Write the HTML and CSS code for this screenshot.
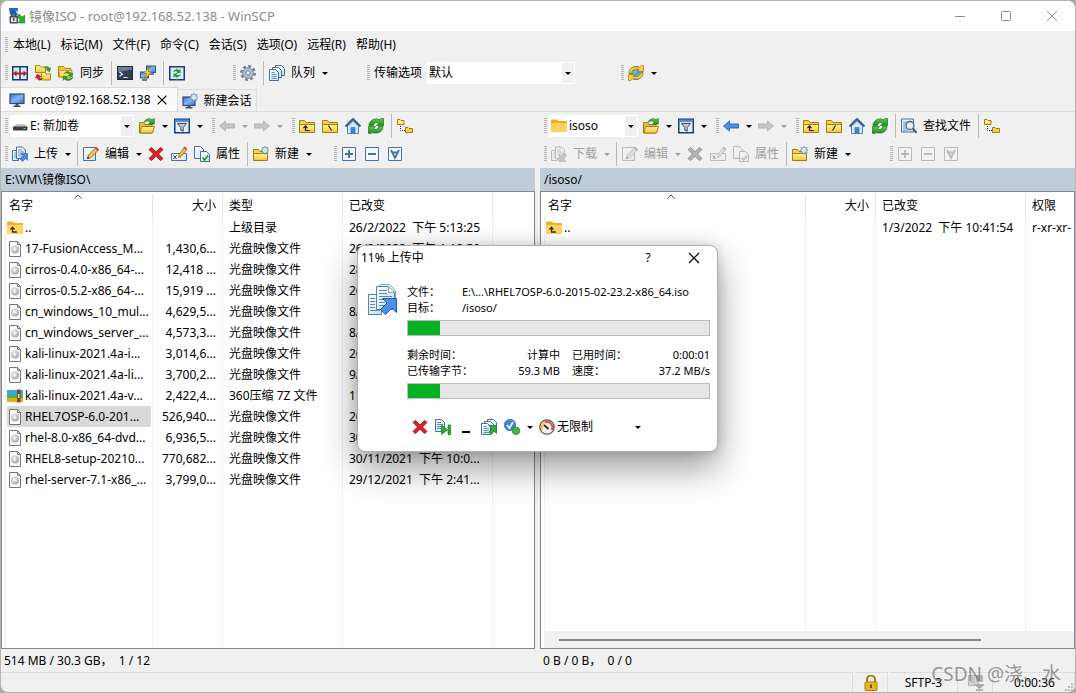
FILE: index.html
```html
<!DOCTYPE html>
<html lang="zh-CN">
<head>
<meta charset="utf-8">
<title>镜像ISO - root@192.168.52.138 - WinSCP</title>
<link rel="stylesheet" href="styles.css">
</head>
<body>
<svg class="defs" width="0" height="0" aria-hidden="true">
  <defs>
    <linearGradient id="gy" x1="0" y1="0" x2="0" y2="1"><stop offset="0" stop-color="#fff39a"/><stop offset="1" stop-color="#f5c936"/></linearGradient>
    <linearGradient id="gb" x1="0" y1="0" x2="1" y2="1"><stop offset="0" stop-color="#2f72d8"/><stop offset=".5" stop-color="#7db8ff"/><stop offset="1" stop-color="#2d6fd2"/></linearGradient>
    <linearGradient id="gp" x1="0" y1="0" x2="1" y2="1"><stop offset="0" stop-color="#ffffff"/><stop offset="1" stop-color="#c9def3"/></linearGradient>
    <linearGradient id="gg" x1="0" y1="0" x2="0" y2="1"><stop offset="0" stop-color="#5fcf4c"/><stop offset="1" stop-color="#1d8a1e"/></linearGradient>
    <radialGradient id="gd" cx=".4" cy=".35" r=".7"><stop offset="0" stop-color="#f4f4f4"/><stop offset="1" stop-color="#9fa3a6"/></radialGradient>
  </defs>
  <symbol id="app" viewBox="0 0 16 16"><path d="M1 0h8v4L6.500 2.500 7 8H2z" fill="#2f80d8"/><path d="M0 0h9L6 3l3 3-3 2-3-3-2 2z" fill="#1b6cc8"/><path d="M16 15V7l-3 2-3-3-2 2 3 4-2 3z" fill="#2fae2b" stroke="#167a1c" stroke-width=".5"/><path d="M2.500 8V6a2.200 2.200 0 0 1 4.400 0v2" fill="none" stroke="#444b52" stroke-width="1.400"/><rect x=".5" y="8" width="8.500" height="7.500" rx="1" fill="#46505a"/><rect x="2" y="9.500" width="5.500" height="4.500" fill="#dfe4e8"/><rect x="4.200" y="10" width="1.200" height="3" fill="#333"/></symbol>
  <symbol id="compare" viewBox="0 0 16 16"><rect x=".75" y="1.750" width="14.500" height="13" fill="#dceafa" stroke="#123f77" stroke-width="1.500"/><path d="M8 1v14" stroke="#123f77" stroke-width="1.500"/><path d="M1 8.500l3.500-3v2h7v-2l3.500 3-3.500 3v-2h-7v2z" fill="#c51212"/></symbol>
  <symbol id="syncdirs" viewBox="0 0 16 16"><path d="M.5 .5h4l1 1.500h5v5.500H.5z" fill="url(#gy)" stroke="#b58410"/><path d="M6.500 7.500h3.500l1 1.500h4.500v6h-9z" fill="url(#gy)" stroke="#b58410"/><path d="M9.500 3c1.500-2.300 4-1.800 4.700.2l1.600-.4L14.500 7 11 4.500l1.500-.5c-.6-1.300-1.900-1.500-3-1z" fill="#28a82b" stroke="#16761a" stroke-width=".4"/><path d="M7.500 13.500c-1.500 2.500-5 2-5.300-.7L.4 13 2.200 9l4 2.600-1.700.7c.5 1.200 1.700 1.700 3 1.200z" fill="#d32020" stroke="#8f0d0d" stroke-width=".4"/></symbol>
  <symbol id="sync" viewBox="0 0 16 16"><path d="M.5 12V1.500h5L7 3.500h6V12z" fill="#f2c730" stroke="#b58410"/><path d="M1 5.500h13l-1 6.500H1.500z" fill="url(#gy)" stroke="#b58410" stroke-width=".7"/><path d="M6 8.500c2-3 6-2.500 7 0l2-.8-.8 4.300-4-1.700 1.500-.7C10.500 8 8 7.700 6 8.500zM15 12c-1 4-6 4.500-8.500 2L5 15.500V11l4.500.8-1.500 1C9.500 14.500 13 14 15 12z" fill="#2aa12b" stroke="#16761a" stroke-width=".4"/></symbol>
  <symbol id="console" viewBox="0 0 16 16"><rect x=".5" y="1.500" width="15" height="13" fill="#2f4156" stroke="#1c2b3a"/><path d="M1 2h14v2.500L1 7z" fill="#6c7f93"/><path d="M2.500 7l3 2.200-3 2.200" fill="none" stroke="#fff" stroke-width="1.100"/><path d="M6.500 12.500h4" stroke="#fff"/></symbol>
  <symbol id="putty" viewBox="0 0 16 16"><rect x="6.500" y="1" width="9" height="6.500" fill="url(#gb)" stroke="#45566a"/><path d="M9 9h5" stroke="#45566a" stroke-width="1.500"/><rect x=".5" y="7" width="8" height="6" fill="url(#gb)" stroke="#45566a"/><path d="M2 15h5" stroke="#45566a" stroke-width="1.500"/><path d="M9.500 2L4 8.500h3L4.500 14 11.500 7H8z" fill="#ffe03a" stroke="#a8780c" stroke-width=".7"/></symbol>
  <symbol id="syncbrowse" viewBox="0 0 16 16"><rect x=".75" y="1.750" width="14.500" height="13" fill="#dceafa" stroke="#123f77" stroke-width="1.500"/><path d="M8 2v13" stroke="#7fa0c6" stroke-width=".8"/><path d="M4 7.500C4.500 4.500 8 3.500 10 5l1.500-1.200V8H7.500l1.200-1.300C7 5.800 5.500 6 4 7.500zM12 9c-.5 3-4 4-6 2.500l-1.500 1.200V8.500h4L7.300 9.800C9 10.700 10.500 10.500 12 9z" fill="#21a027"/></symbol>
  <symbol id="gear" viewBox="0 0 16 16"><circle cx="8" cy="8" r="6.700" fill="none" stroke="#6d7f90" stroke-width="2.400" stroke-dasharray="2.900 2.362"/><circle cx="8" cy="8" r="5.300" fill="#b3c0cd" stroke="#71869b"/><circle cx="8" cy="8" r="2.200" fill="#f0f0f0" stroke="#6b7d90"/></symbol>
  <symbol id="queue" viewBox="0 0 16 16"><path d="M6.500.5h6l3 3v7h-9z" fill="url(#gp)" stroke="#43719f"/><path d="M3.500 2.500h6l3 3v7h-9z" fill="url(#gp)" stroke="#43719f"/><path d="M.5 4.500h6l3 3v8h-9z" fill="url(#gp)" stroke="#43719f"/><path d="M2.500 7.500h3M2.500 9.500h5M2.500 11.500h5M2.500 13.500h5" stroke="#5c8fc2"/></symbol>
  <symbol id="globe" viewBox="0 0 16 16"><circle cx="8" cy="8" r="6.500" fill="#4f9be6" stroke="#2b6ab0"/><path d="M5 7l3-2 1 2-2 3-2-.5zM10 9.500l2-1-1 3-1 .5z" fill="#6fd06a"/><path d="M.8 8C1 3 6 .5 11 2.500L13 .5h2.500v6H9.500L11 4.700C7.500 3.500 4 4.500 3.500 8zM15.200 8c-.2 5-5.200 7.500-10.200 5.500l-2 2H.5v-6h6L5 11.300c3.500 1.200 7 .2 7.500-3.300z" fill="#f7cf3c" stroke="#a9790e" stroke-width=".7"/></symbol>
  <symbol id="monitor" viewBox="0 0 16 16"><rect x="1" y="2" width="14" height="9.500" fill="url(#gb)" stroke="#3f4a56" stroke-width="1.200"/><path d="M6.500 12h3v1.500h2V15h-7v-1.500h2z" fill="#46525f"/></symbol>
  <symbol id="newsess" viewBox="0 0 16 16"><rect x="1" y="4" width="12" height="8.500" fill="url(#gb)" stroke="#3f4a56" stroke-width="1.200"/><path d="M5.500 13h3v1h2v1.500h-7V14h2z" fill="#46525f"/><path d="M12 .2l1 1.800 2-.7-.7 2 1.700 1-1.700 1 .7 2-2-.7-1 1.800-1-1.800-2 .7.700-2-1.700-1 1.700-1-.7-2 2 .7z" fill="#d5e4f4" stroke="#6c93ba" stroke-width=".8"/></symbol>
  <symbol id="drive" viewBox="0 0 16 16"><path d="M4 6h9l2.500 3H1z" fill="#c3c5c7"/><rect x="1" y="8.500" width="14.500" height="4" rx="1" fill="#3c3e41"/><rect x="11.500" y="10" width="2" height="1" fill="#4fdf58"/></symbol>
  <symbol id="open" viewBox="0 0 16 16"><path d="M.5 15V4.500h4L6 6.500h7V15z" fill="#e9c036" stroke="#a87b10"/><path d="M1 15l1.500-6.500h13L13.500 15z" fill="url(#gy)" stroke="#a87b10"/><path d="M5 4.500C6 .8 10.500-.2 13 1.700L15.300.5v5.700h-5.800l1.700-1.700C9.500 2.500 7 2.700 5 4.500z" fill="url(#gg)" stroke="#15751a" stroke-width=".6"/></symbol>
  <symbol id="filter" viewBox="0 0 16 16"><rect x=".75" y="1.250" width="14.500" height="13.500" fill="#e4eefa" stroke="#183f74" stroke-width="1.500"/><path d="M1 1.500h14V4H1z" fill="#4f8ee0"/><path d="M3.500 5.500h9L9.200 9.500v3.700l-2.400-1V9.500z" fill="#c6c9cc" stroke="#474d55"/></symbol>
  <symbol id="back" viewBox="0 0 16 16"><path d="M.5 8L6.500 3v3h9v4h-9v3z" fill="#4a90f0" stroke="#2360b0" stroke-width=".9"/></symbol>
  <symbol id="fwd" viewBox="0 0 16 16"><path d="M15.500 8L9.500 3v3h-9v4h9v3z" fill="#4a90f0" stroke="#2360b0" stroke-width=".9"/></symbol>
  <symbol id="folder" viewBox="0 0 16 16"><path d="M.5 14.500V2.500h5L7 4.500h8.500v10z" fill="#f7d64d" stroke="#a87b10"/><path d="M1 7h14v7H1z" fill="url(#gy)"/><path d="M.5 6.500h15" stroke="#a87b10"/></symbol>
  <symbol id="up" viewBox="0 0 16 16"><use href="#folder"/><path d="M6.500 12.500V8M4.500 10l2-2.200 2 2.200M6 12.500h5" fill="none" stroke="#222" stroke-width="1.200"/></symbol>
  <symbol id="rootl" viewBox="0 0 16 16"><use href="#folder"/><path d="M6.500 7.500l3 5" stroke="#222" stroke-width="1.200"/></symbol>
  <symbol id="rootr" viewBox="0 0 16 16"><use href="#folder"/><path d="M9.500 7.500l-3 5" stroke="#222" stroke-width="1.200"/></symbol>
  <symbol id="home" viewBox="0 0 16 16"><path d="M2.500 8L8 3l5.500 5v7.500h-11z" fill="#d5e6fa" stroke="#5582b4"/><path d="M.5 8.500L8 1l7.500 7.500" fill="none" stroke="#3b5f8d" stroke-width="2"/><path d="M6 9.500h4V15H6z" fill="#3c86e6" stroke="#2c5f9d" stroke-width=".5"/></symbol>
  <symbol id="refresh" viewBox="0 0 16 16"><path d="M1 7.500C1 3 5.500-.5 11.500 1.500L13.500 .5h2v7H8.500L10.800 4.800C8 3.700 6 5 5.500 7.500z" fill="url(#gg)" stroke="#15751a" stroke-width=".7"/><path d="M15 8.500c0 4.500-4.500 8-10.500 6l-2 1h-2v-7h7L5.200 11.200c2.800 1.100 4.800-.2 5.300-2.700z" fill="url(#gg)" stroke="#15751a" stroke-width=".7"/></symbol>
  <symbol id="tree" viewBox="0 0 16 16"><path d="M.5 6.500v-5h2.500l1 1h3v4zM8.500 14.500v-5H11l1 1h3.500v4z" fill="url(#gy)" stroke="#a87b10"/><path d="M3.500 8v4.500H8" fill="none" stroke="#222" stroke-dasharray="1 1"/></symbol>
  <symbol id="upload" viewBox="0 0 16 16"><path d="M.5 4.500h6v10h-6z" fill="url(#gp)" stroke="#43719f"/><path d="M4.500 1h6l3 3v8.500h-9z" fill="url(#gp)" stroke="#43719f"/><path d="M6 4h4M6 6h6M6 8h5M6 10h4M2 7h2M2 9h2M2 11h2" stroke="#5c8fc2" stroke-width=".9"/><path d="M15.800 7.500v7l-2.200-2.200-3 3.200-2.600-2.600 3.200-3L9 7.500z" fill="#4a8be8" stroke="#2257a6" stroke-width=".6"/></symbol>
  <symbol id="bigupload" viewBox="0 0 32 32"><path d="M1.500 10.500h13v20h-13z" fill="url(#gp)" stroke="#5480ad"/><path d="M11.500 2.500l2-2h9l6 6v15h-17z" fill="#eaf3fc" stroke="#7fa4c8"/><path d="M9.500 2.500h12l6 6v17h-18z" fill="url(#gp)" stroke="#5480ad"/><path d="M21.500 2.500v6h6z" fill="#fff" stroke="#7fa4c8"/><path d="M12 6.500h8M12 9.500h8M12 12.500h13M12 15.500h8M12 18.500h6M12 21.500h6M3 14.500h5M3 17.500h5M3 20.500h5M3 23.500h5M3 26.500h10" stroke="#4f86bf"/><path d="M29.500 14.500v14L25 24l-6.500 6.500-5-5L20 19l-4.500-4.500z" fill="#4d8ff0" stroke="#2456a0"/></symbol>
  <symbol id="download" viewBox="0 0 16 16"><path d="M.5 4.500h6v10h-6z" fill="url(#gp)" stroke="#43719f"/><path d="M4.500 1h6l3 3v8.500h-9z" fill="url(#gp)" stroke="#43719f"/><path d="M6 4h4M6 6h6M6 8h5M2 7h2M2 9h2M2 11h2" stroke="#5c8fc2" stroke-width=".9"/><path d="M8 15.500v-7l2.200 2 2-3.200 3.500 2-3 3.800 2.300 2.400z" fill="#4a8be8" stroke="#2257a6" stroke-width=".6"/></symbol>
  <symbol id="edit" viewBox="0 0 16 16"><path d="M.5 1.500h12v13H.5z" fill="url(#gp)" stroke="#4b7199"/><path d="M4.500 12.500l1-3.500L13 1.500 15.500 4 8 11.500z" fill="#f5c63a" stroke="#8a6312" stroke-width=".8"/><path d="M12 2.500L13.500 1 16 3.500 14.500 5z" fill="#d9483b"/><path d="M4 13l.8-2.400 1.600 1.600z" fill="#222"/></symbol>
  <symbol id="del" viewBox="0 0 16 16"><path d="M1 3.500L3.500 1.500 8 5.800l4.500-4.300L15 3.500 10.500 8l4.500 4.500-2.500 2L8 10.300l-4.500 4.200-2.500-2L5.500 8z" fill="#dc2222" stroke="#8f0d0d" stroke-width=".8"/></symbol>
  <symbol id="rename" viewBox="0 0 16 16"><path d="M.5 7.500h15v7H.5z" fill="#e3eefa" stroke="#4b7199"/><path d="M2.500 9.500l3 3.500M5.500 9.500l-3 3.500" stroke="#333"/><path d="M7.500 11.500l.7-3L13.500 1 16 3l-6 7.500z" fill="#f5c63a" stroke="#8a6312" stroke-width=".8"/><path d="M12.500 2l1.200-1.500L16 2.500 15 4z" fill="#d9483b"/></symbol>
  <symbol id="props" viewBox="0 0 16 16"><path d="M.5 .5h6l3 3v9h-9z" fill="url(#gp)" stroke="#4b7199"/><path d="M6.500 5.500h6l3 3v7h-9z" fill="url(#gp)" stroke="#4b7199"/><path d="M8.500 11.500l2 2.500L14 9.500" fill="none" stroke="#2a9a2c" stroke-width="1.800"/></symbol>
  <symbol id="newf" viewBox="0 0 16 16"><path d="M.5 14.500V3.500h5L7 5.500h7.500v9z" fill="#f7d64d" stroke="#a87b10"/><path d="M1 8h13v6H1z" fill="url(#gy)"/><path d="M.5 7.500h14" stroke="#a87b10"/><path d="M12 .2l1 1.800 2-.7-.7 2 1.700 1-1.700 1 .7 2-2-.7-1 1.800-1-1.800-2 .7.700-2-1.700-1 1.700-1-.7-2 2 .7z" fill="#d5e4f4" stroke="#6c93ba" stroke-width=".8"/></symbol>
  <symbol id="plus" viewBox="0 0 16 16"><path d="M1.500 1.500h13v13h-13z" fill="#f3f7fc" stroke="#4573a5"/><path d="M4 8h8M8 4v8" stroke="#4573a5" stroke-width="2"/></symbol>
  <symbol id="minus" viewBox="0 0 16 16"><path d="M1.500 1.500h13v13h-13z" fill="#f3f7fc" stroke="#4573a5"/><path d="M4 8h8" stroke="#4573a5" stroke-width="2"/></symbol>
  <symbol id="vmask" viewBox="0 0 16 16"><path d="M1.500 1.500h13v13h-13z" fill="#f3f7fc" stroke="#4573a5"/><path d="M4 4l4 8 4-8M5 6.500h6" fill="none" stroke="#4573a5" stroke-width="1.800"/></symbol>
  <symbol id="find" viewBox="0 0 16 16"><path d="M.5 1h12v13H.5z" fill="url(#gp)" stroke="#43719f"/><path d="M2 4h5M2 6h3M2 8h2M2 10h3M2 12h5" stroke="#5c8fc2"/><circle cx="9" cy="7.500" r="4" fill="#dfeefc" stroke="#56616d" stroke-width="1.300"/><path d="M12 10.500l3.500 4.500" stroke="#444d57" stroke-width="2"/></symbol>
  <symbol id="parent" viewBox="0 0 16 16"><path d="M0 2.500a1 1 0 0 1 1-1h5L7.500 3H15a1 1 0 0 1 1 1v9.500H0z" fill="#f0b02a"/><path d="M0 5h16v8a1 1 0 0 1-1 1H1a1 1 0 0 1-1-1z" fill="#ffd662"/><path d="M5.500 12V7.500M3.500 9.500l2-2.200 2 2.200M5 12h5" fill="none" stroke="#333" stroke-width="1.300"/></symbol>
  <symbol id="wfolder" viewBox="0 0 16 16"><path d="M0 2.500a1 1 0 0 1 1-1h5L7.500 3H15a1 1 0 0 1 1 1v9.500H0z" fill="#f2ac17"/><path d="M0 5h16v8a1 1 0 0 1-1 1H1a1 1 0 0 1-1-1z" fill="#ffd15c"/></symbol>
  <symbol id="iso" viewBox="0 0 16 16"><path d="M2.500.5h8l3 3v12h-11z" fill="#fafafa" stroke="#777"/><path d="M10.500.5v3h3" fill="none" stroke="#777"/><circle cx="8" cy="8.500" r="4" fill="url(#gd)"/><circle cx="8" cy="8.500" r="1" fill="#f5f5f5"/></symbol>
  <symbol id="zip7" viewBox="0 0 16 16"><path d="M0 2h16v5H0z" fill="#35a6ea"/><path d="M0 7h16v4H0z" fill="#4fb52f"/><path d="M0 10h16v4H0z" fill="#f0a81f"/><path d="M10 1.500h3.500v13H10z" fill="#7a4a20"/><path d="M11 6h1.500v4H11z" fill="#e8d9b0"/></symbol>
  <symbol id="skip" viewBox="0 0 16 16"><path d="M.5.500h6l3 3v9h-9z" fill="url(#gp)" stroke="#43719f"/><path d="M2 3.500h4M2 5.500h6M2 7.500h4M2 9.500h4" stroke="#5c8fc2"/><path d="M6.500 6l6 4.800-6 4.700zM13 6h2.500v9.500H13z" fill="#2fae30" stroke="#16761a" stroke-width=".7"/></symbol>
  <symbol id="mini" viewBox="0 0 16 16"><path d="M4 13h8" stroke="#000" stroke-width="2"/></symbol>
  <symbol id="toqueue" viewBox="0 0 16 16"><use href="#queue"/><path d="M15.500 6.500v8l-2.300-2.300-3 3.300-2.500-2.500 3.200-3L8 6.500z" fill="#2fae30" stroke="#16761a" stroke-width=".7"/></symbol>
  <symbol id="after" viewBox="0 0 16 16"><circle cx="6" cy="6" r="5.700" fill="#3f86e0" stroke="#2257a6" stroke-width=".6"/><path d="M3 6l2.500 3L9 3" fill="none" stroke="#fff" stroke-width="1.600"/><circle cx="12" cy="11.800" r="3.800" fill="#41b93c" stroke="#16761a" stroke-width=".6"/></symbol>
  <symbol id="speed" viewBox="0 0 16 16"><circle cx="8" cy="8" r="7.200" fill="#f4f4f4" stroke="#555" stroke-width="1.300"/><path d="M3.500 11A5.300 5.300 0 0 1 6 3.300" fill="none" stroke="#f6c62b" stroke-width="2"/><path d="M6 3.300A5.300 5.300 0 0 1 12.500 11" fill="none" stroke="#e5522c" stroke-width="2"/><path d="M5 6l4.500 4" stroke="#222" stroke-width="1.800"/></symbol>
  <symbol id="lock" viewBox="0 0 16 16"><path d="M4 8V4.500a4 4 0 0 1 8 0V8" fill="none" stroke="#a8780c" stroke-width="2"/><rect x="2" y="7" width="12" height="8.500" rx="1" fill="#f3bd2d" stroke="#a8780c"/><path d="M3 10h10M3 13h10" stroke="#dd9f18"/><path d="M8 9.500v3.500" stroke="#4b3508" stroke-width="1.500"/></symbol>
  <symbol id="zipoff" viewBox="0 0 16 16"><path d="M.5 .5h10v10H.5z" fill="#d5d5d5" stroke="#b5b5b5"/><path d="M2 3h5M2 5h5M2 7h5" stroke="#b0b0b0"/><path d="M9 1h5v5H9zM8 10h7l-3.500 3zM8 15h7" fill="#c4c4c4" stroke="#a3a3a3" stroke-width="1.500"/></symbol>
  <symbol id="x" viewBox="0 0 16 16"><path d="M3 3l10 10M13 3L3 13" stroke="currentColor" stroke-width="1.300" fill="none"/></symbol>
</svg>

<main class="window">
  <header class="titlebar">
    <svg class="ic"><use href="#app"/></svg>
    <h1>镜像ISO - root@192.168.52.138 - WinSCP</h1>
    <button class="cap" aria-label="最小化"><svg viewBox="0 0 12 12"><path d="M1 6.500h10" stroke="currentColor"/></svg></button>
    <button class="cap" aria-label="最大化"><svg viewBox="0 0 12 12"><rect x="1.500" y="1.500" width="9" height="9" rx="1" fill="none" stroke="currentColor"/></svg></button>
    <button class="cap" aria-label="关闭"><svg viewBox="0 0 12 12"><path d="M1 1l10 10M11 1L1 11" stroke="currentColor"/></svg></button>
  </header>

  <nav class="menubar">
    <span class="grip"></span>
    <button>本地(L)</button><button>标记(M)</button><button>文件(F)</button><button>命令(C)</button><button>会话(S)</button><button>选项(O)</button><button>远程(R)</button><button>帮助(H)</button>
  </nav>

  <div class="bar">
    <div class="group">
      <span class="grip"></span>
      <button class="btn" aria-label="比较目录"><svg class="ic"><use href="#compare"/></svg></button>
      <button class="btn" aria-label="同步目录"><svg class="ic"><use href="#syncdirs"/></svg></button>
      <button class="btn"><svg class="ic"><use href="#sync"/></svg>同步</button>
      <span class="sep"></span>
      <button class="btn" aria-label="终端"><svg class="ic"><use href="#console"/></svg></button>
      <button class="btn" aria-label="PuTTY"><svg class="ic"><use href="#putty"/></svg></button>
      <span class="sep"></span>
      <button class="btn" aria-label="同步浏览"><svg class="ic"><use href="#syncbrowse"/></svg></button>
    </div>
    <div class="group wide-gap">
      <span class="grip"></span>
      <button class="btn" aria-label="选项"><svg class="ic"><use href="#gear"/></svg></button>
      <span class="sep"></span>
      <button class="btn"><svg class="ic"><use href="#queue"/></svg>队列</button><button class="drop" aria-label="队列菜单"></button>
    </div>
    <div class="group far">
      <span class="grip"></span>
      <label class="caption" for="preset">传输选项</label>
      <span class="combo preset"><select id="preset"><option>默认</option></select><span class="drop"></span></span>
    </div>
    <div class="group far">
      <span class="grip"></span>
      <button class="btn" aria-label="更新"><svg class="ic"><use href="#globe"/></svg></button><button class="drop" aria-label="更新菜单"></button>
    </div>
  </div>

  <nav class="tabs">
    <div class="tab active"><svg class="ic"><use href="#monitor"/></svg><button class="tabname">root@192.168.52.138</button><button class="tabx" aria-label="关闭会话"><svg><use href="#x"/></svg></button></div>
    <div class="tab"><svg class="ic"><use href="#newsess"/></svg><button class="tabname">新建会话</button></div>
  </nav>

  <div class="panels">
    <section class="panel">
      <div class="bar">
        <div class="group">
          <span class="grip"></span>
          <span class="combo drivebox"><svg class="ic"><use href="#drive"/></svg><select aria-label="驱动器"><option>E: 新加卷</option></select><span class="drop"></span></span>
          <button class="btn" aria-label="打开目录"><svg class="ic"><use href="#open"/></svg></button><button class="drop" aria-label="打开菜单"></button>
          <button class="btn" aria-label="筛选"><svg class="ic"><use href="#filter"/></svg></button><button class="drop" aria-label="筛选菜单"></button>
        </div>
        <div class="group">
          <span class="grip"></span>
          <button class="btn" disabled aria-label="后退"><svg class="ic"><use href="#back"/></svg></button><button class="drop" disabled aria-label="后退菜单"></button>
          <button class="btn" disabled aria-label="前进"><svg class="ic"><use href="#fwd"/></svg></button><button class="drop" disabled aria-label="前进菜单"></button>
        </div>
        <div class="group">
          <span class="grip"></span>
          <button class="btn" aria-label="上级目录"><svg class="ic"><use href="#up"/></svg></button>
          <button class="btn" aria-label="根目录"><svg class="ic"><use href="#rootl"/></svg></button>
          <button class="btn" aria-label="主目录"><svg class="ic"><use href="#home"/></svg></button>
          <button class="btn" aria-label="刷新"><svg class="ic"><use href="#refresh"/></svg></button>
          <span class="sep"></span>
          <button class="btn" aria-label="目录树"><svg class="ic"><use href="#tree"/></svg></button>
        </div>
      </div>
      <div class="bar">
        <div class="group">
          <span class="grip"></span>
          <button class="btn"><svg class="ic"><use href="#upload"/></svg>上传</button><button class="drop" aria-label="上传菜单"></button>
          <span class="sep"></span>
          <button class="btn"><svg class="ic"><use href="#edit"/></svg>编辑</button><button class="drop" aria-label="编辑菜单"></button>
          <button class="btn" aria-label="删除"><svg class="ic"><use href="#del"/></svg></button>
          <button class="btn" aria-label="重命名"><svg class="ic"><use href="#rename"/></svg></button>
          <button class="btn"><svg class="ic"><use href="#props"/></svg>属性</button>
          <span class="sep"></span>
          <button class="btn"><svg class="ic"><use href="#newf"/></svg>新建</button><button class="drop" aria-label="新建菜单"></button>
        </div>
        <div class="group mid">
          <span class="grip"></span>
          <button class="btn" aria-label="选择"><svg class="ic"><use href="#plus"/></svg></button>
          <button class="btn" aria-label="取消选择"><svg class="ic"><use href="#minus"/></svg></button>
          <button class="btn" aria-label="反选"><svg class="ic"><use href="#vmask"/></svg></button>
        </div>
      </div>
      <div class="path">E:\VM\镜像ISO\</div>
      <div class="listbox">
        <table class="files">
          <colgroup><col class="c-name"><col class="c-size"><col class="c-type"><col class="c-date"><col></colgroup>
          <thead><tr><th class="sorted">名字<svg class="caret" viewBox="0 0 8 5"><path d="M.5 4.500L4 1l3.500 3.500" fill="none" stroke="#555"/></svg></th><th class="num">大小</th><th>类型</th><th>已改变</th><th></th></tr></thead>
          <tbody>
            <tr><td><span class="file"><svg class="ic"><use href="#parent"/></svg>..</span></td><td></td><td>上级目录</td><td>26/2/2022 &nbsp;下午 5:13:25</td><td></td></tr>
            <tr><td><span class="file"><svg class="ic"><use href="#iso"/></svg>17-FusionAccess_M...</span></td><td class="num">1,430,6...</td><td>光盘映像文件</td><td>26/2/2022 &nbsp;下午 1:18:50</td><td></td></tr>
            <tr><td><span class="file"><svg class="ic"><use href="#iso"/></svg>cirros-0.4.0-x86_64-...</span></td><td class="num">12,418 ...</td><td>光盘映像文件</td><td>28</td><td></td></tr>
            <tr><td><span class="file"><svg class="ic"><use href="#iso"/></svg>cirros-0.5.2-x86_64-...</span></td><td class="num">15,919 ...</td><td>光盘映像文件</td><td>26</td><td></td></tr>
            <tr><td><span class="file"><svg class="ic"><use href="#iso"/></svg>cn_windows_10_mul...</span></td><td class="num">4,629,5...</td><td>光盘映像文件</td><td>8/</td><td></td></tr>
            <tr><td><span class="file"><svg class="ic"><use href="#iso"/></svg>cn_windows_server_...</span></td><td class="num">4,573,3...</td><td>光盘映像文件</td><td>8/</td><td></td></tr>
            <tr><td><span class="file"><svg class="ic"><use href="#iso"/></svg>kali-linux-2021.4a-i...</span></td><td class="num">3,014,6...</td><td>光盘映像文件</td><td>26</td><td></td></tr>
            <tr><td><span class="file"><svg class="ic"><use href="#iso"/></svg>kali-linux-2021.4a-li...</span></td><td class="num">3,700,2...</td><td>光盘映像文件</td><td>9/</td><td></td></tr>
            <tr><td><span class="file"><svg class="ic"><use href="#zip7"/></svg>kali-linux-2021.4a-v...</span></td><td class="num">2,422,4...</td><td>360压缩 7Z 文件</td><td>11</td><td></td></tr>
            <tr><td><span class="file selected"><svg class="ic"><use href="#iso"/></svg>RHEL7OSP-6.0-201...</span></td><td class="num">526,940...</td><td>光盘映像文件</td><td>26</td><td></td></tr>
            <tr><td><span class="file"><svg class="ic"><use href="#iso"/></svg>rhel-8.0-x86_64-dvd...</span></td><td class="num">6,936,5...</td><td>光盘映像文件</td><td>30</td><td></td></tr>
            <tr><td><span class="file"><svg class="ic"><use href="#iso"/></svg>RHEL8-setup-20210...</span></td><td class="num">770,682...</td><td>光盘映像文件</td><td>30/11/2021 &nbsp;下午 10:0...</td><td></td></tr>
            <tr><td><span class="file"><svg class="ic"><use href="#iso"/></svg>rhel-server-7.1-x86_...</span></td><td class="num">3,799,0...</td><td>光盘映像文件</td><td>29/12/2021 &nbsp;下午 2:41...</td><td></td></tr>
            <tr class="fill"><td></td><td></td><td></td><td></td><td></td></tr>
          </tbody>
        </table>
      </div>
      <div class="summary">514 MB / 30.3 GB， &nbsp;1 / 12</div>
    </section>

    <section class="panel">
      <div class="bar">
        <div class="group">
          <span class="grip"></span>
          <span class="combo dirbox"><svg class="ic"><use href="#wfolder"/></svg><select aria-label="远程目录"><option>isoso</option></select><span class="drop"></span></span>
          <button class="btn" aria-label="打开目录"><svg class="ic"><use href="#open"/></svg></button><button class="drop" aria-label="打开菜单"></button>
          <button class="btn" aria-label="筛选"><svg class="ic"><use href="#filter"/></svg></button><button class="drop" aria-label="筛选菜单"></button>
        </div>
        <div class="group">
          <span class="grip"></span>
          <button class="btn" aria-label="后退"><svg class="ic"><use href="#back"/></svg></button><button class="drop" aria-label="后退菜单"></button>
          <button class="btn" disabled aria-label="前进"><svg class="ic"><use href="#fwd"/></svg></button><button class="drop" disabled aria-label="前进菜单"></button>
        </div>
        <div class="group">
          <span class="grip"></span>
          <button class="btn" aria-label="上级目录"><svg class="ic"><use href="#up"/></svg></button>
          <button class="btn" aria-label="根目录"><svg class="ic"><use href="#rootr"/></svg></button>
          <button class="btn" aria-label="主目录"><svg class="ic"><use href="#home"/></svg></button>
          <button class="btn" aria-label="刷新"><svg class="ic"><use href="#refresh"/></svg></button>
          <span class="sep"></span>
          <button class="btn"><svg class="ic"><use href="#find"/></svg>查找文件</button>
          <span class="sep"></span>
          <button class="btn" aria-label="目录树"><svg class="ic"><use href="#tree"/></svg></button>
        </div>
      </div>
      <div class="bar">
        <div class="group">
          <span class="grip"></span>
          <button class="btn" disabled><svg class="ic"><use href="#download"/></svg>下载</button><button class="drop" disabled aria-label="下载菜单"></button>
          <span class="sep"></span>
          <button class="btn" disabled><svg class="ic"><use href="#edit"/></svg>编辑</button><button class="drop" disabled aria-label="编辑菜单"></button>
          <button class="btn" disabled aria-label="删除"><svg class="ic dark"><use href="#del"/></svg></button>
          <button class="btn" disabled aria-label="重命名"><svg class="ic"><use href="#rename"/></svg></button>
          <button class="btn" disabled><svg class="ic"><use href="#props"/></svg>属性</button>
          <span class="sep"></span>
          <button class="btn"><svg class="ic"><use href="#newf"/></svg>新建</button><button class="drop" aria-label="新建菜单"></button>
        </div>
        <div class="group far">
          <span class="grip"></span>
          <button class="btn" disabled aria-label="选择"><svg class="ic"><use href="#plus"/></svg></button>
          <button class="btn" disabled aria-label="取消选择"><svg class="ic"><use href="#minus"/></svg></button>
          <button class="btn" disabled aria-label="反选"><svg class="ic"><use href="#vmask"/></svg></button>
        </div>
      </div>
      <div class="path">/isoso/</div>
      <div class="listbox">
        <table class="files">
          <colgroup><col class="c-rname"><col class="c-size"><col class="c-date"><col></colgroup>
          <thead><tr><th class="sorted">名字<svg class="caret" viewBox="0 0 8 5"><path d="M.5 4.500L4 1l3.500 3.500" fill="none" stroke="#555"/></svg></th><th class="num">大小</th><th>已改变</th><th>权限</th></tr></thead>
          <tbody>
            <tr><td><span class="file"><svg class="ic"><use href="#parent"/></svg>..</span></td><td></td><td>1/3/2022 &nbsp;下午 10:41:54</td><td>r-xr-xr-</td></tr>
            <tr class="fill"><td></td><td></td><td></td><td></td></tr>
          </tbody>
        </table>
        <div class="scroll"><span class="thumb"></span></div>
      </div>
      <div class="summary">0 B / 0 B， &nbsp;0 / 0</div>
    </section>
  </div>

  <footer class="status">
    <span class="cell wide"></span>
    <span class="cell small"><svg class="ic"><use href="#lock"/></svg></span>
    <span class="cell proto">SFTP-3</span>
    <span class="cell small"><svg class="ic"><use href="#zipoff"/></svg></span>
    <span class="cell time">0:00:36<svg class="sizer" viewBox="0 0 10 10"><path d="M7 1h2v2H7zM7 4h2v2H7zM4 4h2v2H4zM7 7h2v2H7zM4 7h2v2H4zM1 7h2v2H1z" fill="#bbb"/></svg></span>
  </footer>

  <div class="watermark">CSDN @浇、水</div>

  <div class="dialog" role="dialog" aria-labelledby="dlgtitle">
    <header class="dlghead">
      <h2 id="dlgtitle">11% 上传中</h2>
      <button class="cap" aria-label="帮助">?</button>
      <button class="cap" aria-label="关闭"><svg viewBox="0 0 12 12"><path d="M1 1l10 10M11 1L1 11" stroke="currentColor" stroke-width="1.200"/></svg></button>
    </header>
    <div class="dlgbody">
      <svg class="big"><use href="#bigupload"/></svg>
      <div class="info">
        <div class="pair"><span>文件：</span><span>E:\...\RHEL7OSP-6.0-2015-02-23.2-x86_64.iso</span></div>
        <div class="pair"><span>目标：</span><span>/isoso/</span></div>
        <progress value="10.500" max="100" aria-label="文件进度"></progress>
        <div class="stats">
          <div class="stat"><span>剩余时间：</span><span>计算中</span></div>
          <div class="stat"><span>已用时间：</span><span>0:00:01</span></div>
          <div class="stat"><span>已传输字节：</span><span>59.3 MB</span></div>
          <div class="stat"><span>速度：</span><span>37.2 MB/s</span></div>
        </div>
        <progress value="10.500" max="100" aria-label="总进度"></progress>
        <div class="dlgtools">
          <button class="btn" aria-label="取消"><svg class="ic"><use href="#del"/></svg></button>
          <button class="btn" aria-label="跳过"><svg class="ic"><use href="#skip"/></svg></button>
          <button class="btn" aria-label="最小化"><svg class="ic"><use href="#mini"/></svg></button>
          <button class="btn" aria-label="移到队列"><svg class="ic"><use href="#toqueue"/></svg></button>
          <button class="btn" aria-label="完成后"><svg class="ic"><use href="#after"/></svg></button><button class="drop" aria-label="完成后菜单"></button>
          <span class="combo speed"><svg class="ic"><use href="#speed"/></svg><select aria-label="速度限制"><option>无限制</option></select><span class="drop"></span></span>
        </div>
      </div>
    </div>
  </div>
</main>
</body>
</html>
```
FILE: styles.css
```css
* { box-sizing: border-box; }
body {
  margin: 0;
  background: #a9a9a9;
  color: #000;
  font: 12px/16px "Noto Sans", "Noto Sans CJK SC", sans-serif;
}
button, select { margin: 0; padding: 0; border: 0; background: none; color: inherit; font: inherit; }
h1, h2 { margin: 0; font-weight: normal; }
.defs { position: absolute; }
.ic { width: 16px; height: 16px; flex: none; }

.window {
  position: relative;
  display: flex;
  flex-direction: column;
  height: 100vh;
  border: 1px solid #b4b4b4;
  border-radius: 8px;
  background: #f0f0f0;
  overflow: hidden;
}

.titlebar { display: flex; align-items: center; height: 30px; padding-left: 8px; background: #fff; color: #8c8c8c; }
.titlebar h1 { flex: 1; margin-left: 4px; font-size: 13px; }
.cap { display: flex; align-items: center; justify-content: center; width: 46px; height: 100%; }
.cap svg { width: 12px; height: 12px; }

.grip {
  flex: none;
  width: 3px;
  height: 16px;
  margin-right: 1px;
  background: repeating-linear-gradient(#b4b4b4 0 1px, #f0f0f0 1px 2px);
}

.menubar { display: flex; align-items: center; height: 28px; padding-left: 4px; }
.menubar button { padding: 0 5px; }
.menubar .grip { margin-right: 0; }

.bar { display: flex; align-items: center; height: 28px; padding-left: 4px; white-space: nowrap; }
.group { display: flex; align-items: center; }
.group + .group { margin-left: 6px; }
.group + .mid { margin-left: 19px; }
.group + .far { margin-left: 36px; }
.group + .wide-gap { margin-left: 44px; }
.btn { display: flex; align-items: center; gap: 6px; height: 24px; padding: 0 4px 0 3px; }
.sep { width: 6px; height: 24px; background: linear-gradient(#b8b8b8, #b8b8b8) 3px 0 / 1px 100% no-repeat; }
.drop { display: flex; align-items: center; justify-content: center; width: 12px; height: 22px; flex: none; }
.drop::before { content: ""; border: 3px solid transparent; border-top-color: #000; border-bottom: 0; }
.btn:disabled { color: #a0a0a0; }
.btn:disabled .ic { filter: grayscale(1); opacity: .4; }
.btn:disabled .dark { opacity: .65; filter: grayscale(1) brightness(2); }
.drop:disabled::before { border-top-color: #a0a0a0; }

.combo { display: flex; align-items: center; height: 22px; margin: 0 2px 0 1px; background: #fff; }
.combo select { flex: 1; min-width: 0; height: 22px; appearance: none; outline: 0; }
.combo .drop { background: #f0f0f0; height: 20px; margin-right: 1px; pointer-events: none; }
.caption { margin: 0 4px 0 3px; }
.preset { width: 148px; margin-right: 10px; padding-left: 2px; }
.drivebox { width: 124px; padding-left: 2px; gap: 2px; }
.dirbox { width: 89px; padding-left: 2px; gap: 2px; }

.tabs { display: flex; align-items: flex-end; height: 25px; border-bottom: 1px solid #dcdcdc; }
.tab { display: flex; align-items: center; height: 22px; padding: 0 4px; gap: 6px; border: 1px solid #dcdcdc; border-left: 0; border-bottom: 0; }
.tab.active { height: 24px; padding: 0 8px; background: #fafafa; }
.tabx { width: 14px; height: 14px; margin-left: -2px; }
.tabx svg { display: block; width: 14px; height: 14px; }

.panels { flex: 1; display: grid; grid-template-columns: minmax(0, 534fr) minmax(0, 535fr); gap: 5px; min-height: 0; }
.panel { display: flex; flex-direction: column; min-width: 0; min-height: 0; }
.path { height: 23px; padding: 4px; background: #bfcddb; }
.listbox { display: flex; flex-direction: column; flex: 1; min-height: 0; padding: 2px 0 0 3px; border: 1px solid #828790; background: #fff; overflow: hidden; }

.files { flex: 1; width: 100%; height: 100%; table-layout: fixed; border-collapse: separate; border-spacing: 0; white-space: nowrap; }
.c-name { width: 148px; }
.c-rname { width: 262px; }
.c-size { width: 70px; }
.c-type { width: 120px; }
.c-date { width: 150px; }
.files th { position: relative; height: 23px; padding: 0 6px; border-right: 1px solid #e5e5e5; font-weight: normal; text-align: left; }
.files th.sorted { padding-left: 4px; }
.files td { height: 21px; padding: 0 6px; border-right: 1px solid #e9f2fb; overflow: hidden; }
.files td:first-child { padding: 0 1px; border-left: 1px solid #e9f2fb; }
.files th:last-child, .files td:last-child { border-right: 0; }
.files .num { text-align: right; }
.files .fill td { height: auto; }
.file { display: flex; align-items: center; gap: 2px; height: 21px; }
.selected { background: #d9d9d9; border-radius: 2px; }
.caret { position: absolute; top: 0; left: 47%; width: 8px; height: 5px; }
.scroll { flex: none; display: flex; align-items: center; height: 17px; padding: 0 93px 0 15px; background: #f0f0f0; }
.thumb { flex: 1; height: 2px; background: #868686; }
.summary { height: 23px; padding: 4px 3px; }

.status { display: flex; gap: 2px; height: 20px; }
.cell { display: flex; align-items: center; justify-content: center; border: 1px solid #dcdcdc; border-left: 0; border-bottom: 0; }
.wide { flex: 1; }
.small { width: 33px; }
.proto { width: 68px; }
.time { width: 80px; position: relative; }
.sizer { position: absolute; right: 0; bottom: 0; width: 10px; height: 10px; }

.watermark { position: absolute; right: 14px; bottom: 4px; color: rgba(120, 120, 120, .75); font-size: 19px; line-height: 28px; }

.dialog {
  position: absolute;
  top: 244px;
  left: 356px;
  width: 361px;
  border: 1px solid #b0b0b0;
  border-radius: 8px;
  background: #fff;
  box-shadow: 0 16px 36px rgba(0, 0, 0, .4), 0 0 12px rgba(0, 0, 0, .15);
}
.dlghead { display: flex; align-items: center; height: 24px; padding-left: 3px; }
.dlghead h2 { flex: 1; font-size: 12px; }
.dlgbody { display: flex; gap: 8px; padding: 14px 7px 12px 10px; font-size: 11px; }
.big { width: 32px; height: 32px; flex: none; margin-left: -1px; }
.info { flex: 1; min-width: 0; }
.pair { display: grid; grid-template-columns: 55px 1fr; white-space: nowrap; }
.dlgbody progress { display: block; width: 100%; height: 16px; margin-top: 4px; border: 1px solid #bcbcbc; background: #e6e6e6; appearance: none; }
progress::-webkit-progress-bar { background: #e6e6e6; }
progress::-webkit-progress-value { background: #06b025; }
.stats { display: grid; grid-template-columns: 153px 1fr; column-gap: 12px; margin-top: 11px; }
.stat { display: flex; justify-content: space-between; }
.dlgtools { display: flex; align-items: center; margin-top: 16px; padding-left: 2px; font-size: 12px; }
.speed { width: 109px; margin: 0; padding-left: 3px; gap: 2px; }
.speed .drop { background: none; }
```
